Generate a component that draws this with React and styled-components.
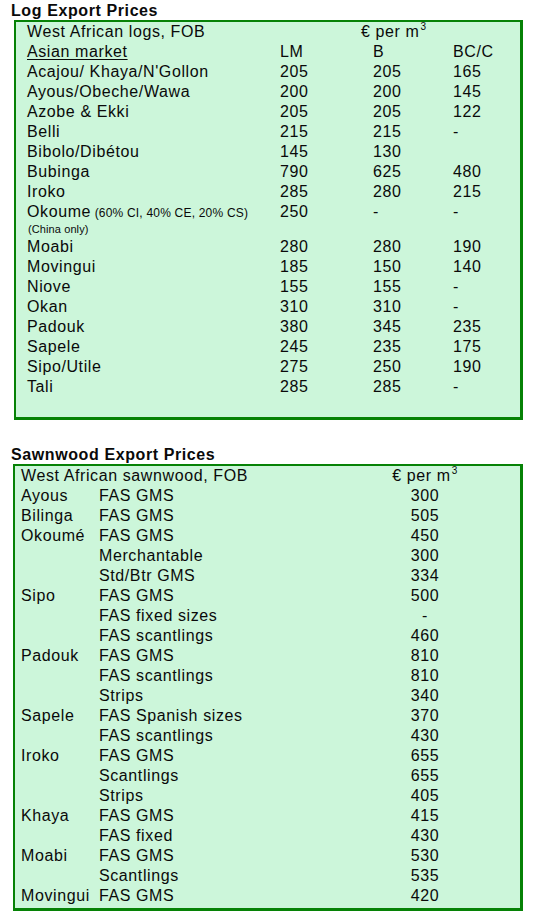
import React from "react";
import styled, { createGlobalStyle } from "styled-components";

const GlobalStyle = createGlobalStyle`
  html, body {
    margin: 0;
    padding: 0;
    background: #ffffff;
  }
  body {
    font-family: "Liberation Sans", Arial, sans-serif;
    color: #0a0a0a;
    font-size: 16px;
    letter-spacing: 0.6px;
  }
`;

const logRows = [
  ["Acajou/ Khaya/N'Gollon", "205", "205", "165"],
  ["Ayous/Obeche/Wawa", "200", "200", "145"],
  ["Azobe & Ekki", "205", "205", "122"],
  ["Belli", "215", "215", "-"],
  ["Bibolo/Dibétou", "145", "130", ""],
  ["Bubinga", "790", "625", "480"],
  ["Iroko", "285", "280", "215"],
  ["Okoume", "250", "-", "-", "(60% CI, 40% CE, 20% CS)", "(China only)"],
  ["Moabi", "280", "280", "190"],
  ["Movingui", "185", "150", "140"],
  ["Niove", "155", "155", "-"],
  ["Okan", "310", "310", "-"],
  ["Padouk", "380", "345", "235"],
  ["Sapele", "245", "235", "175"],
  ["Sipo/Utile", "275", "250", "190"],
  ["Tali", "285", "285", "-"],
];

const sawnRows = [
  ["Ayous", "FAS GMS", "300"],
  ["Bilinga", "FAS GMS", "505"],
  ["Okoumé", "FAS GMS", "450"],
  ["", "Merchantable", "300"],
  ["", "Std/Btr GMS", "334"],
  ["Sipo", "FAS GMS", "500"],
  ["", "FAS fixed sizes", "-"],
  ["", "FAS scantlings", "460"],
  ["Padouk", "FAS GMS", "810"],
  ["", "FAS scantlings", "810"],
  ["", "Strips", "340"],
  ["Sapele", "FAS Spanish sizes", "370"],
  ["", "FAS scantlings", "430"],
  ["Iroko", "FAS GMS", "655"],
  ["", "Scantlings", "655"],
  ["", "Strips", "405"],
  ["Khaya", "FAS GMS", "415"],
  ["", "FAS fixed", "430"],
  ["Moabi", "FAS GMS", "530"],
  ["", "Scantlings", "535"],
  ["Movingui", "FAS GMS", "420"],
];

function PerCubicMetre() {
  return (
    <>
      € per m<Sup>3</Sup>
    </>
  );
}

export default function App() {
  return (
    <Page>
      <GlobalStyle />
      <Title>Log Export Prices</Title>
      <PriceBox $left={14} $bottom={20}>
        <LogGrid>
          <Cell>West African logs, FOB</Cell>
          <Cell $span={3} $offset={81}>
            <PerCubicMetre />
          </Cell>
          <Cell $underline>Asian market</Cell>
          <Cell>LM</Cell>
          <Cell>B</Cell>
          <Cell>BC/C</Cell>
          {logRows.map(([name, lm, b, bc, note, sub]) => (
            <React.Fragment key={name}>
              <Cell>
                {name}
                {note && <Note> {note}</Note>}
                {sub && <SubNote>{sub}</SubNote>}
              </Cell>
              <Cell>{lm}</Cell>
              <Cell>{b}</Cell>
              <Cell>{bc}</Cell>
            </React.Fragment>
          ))}
        </LogGrid>
      </PriceBox>

      <Title $top={24}>Sawnwood Export Prices</Title>
      <PriceBox $left={13} $bottom={2}>
        <SawnGrid>
          <Cell $span={2}>West African sawnwood, FOB</Cell>
          <Cell $center>
            <PerCubicMetre />
          </Cell>
          {sawnRows.map(([species, grade, price], i) => (
            <React.Fragment key={i}>
              <Cell>{species}</Cell>
              <Cell>{grade}</Cell>
              <Cell $center>{price}</Cell>
            </React.Fragment>
          ))}
        </SawnGrid>
      </PriceBox>
    </Page>
  );
}

const Page = styled.div`
  width: 534px;
  padding-bottom: 9px;
`;

const Title = styled.h2`
  margin: ${(p) => p.$top || 0}px 0 0 11px;
  font-size: 16px;
  font-weight: 700;
  line-height: 21px;
  height: 20px;
`;

const PriceBox = styled.section`
  margin-left: ${(p) => p.$left}px;
  width: ${(p) => 523 - p.$left}px;
  box-sizing: border-box;
  background: #ccf6da;
  border-style: solid;
  border-color: #068206;
  border-width: 2px 3px 3px 2px;
  padding-bottom: ${(p) => p.$bottom}px;
`;

const LogGrid = styled.div`
  display: grid;
  grid-template-columns: 253px 93px 80px 1fr;
  padding-left: 11px;
  align-items: start;
`;

const SawnGrid = styled.div`
  display: grid;
  grid-template-columns: 78px 261px 130px;
  padding-left: 6px;
  align-items: start;
`;

const Cell = styled.div`
  line-height: 20px;
  white-space: nowrap;
  grid-column: ${(p) => (p.$span ? `span ${p.$span}` : "auto")};
  padding-left: ${(p) => p.$offset || 0}px;
  text-align: ${(p) => (p.$center ? "center" : "left")};
  text-decoration: ${(p) => (p.$underline ? "underline" : "none")};
  text-underline-offset: 2px;
`;

const Note = styled.span`
  font-size: 12px;
  letter-spacing: 0.2px;
`;

const SubNote = styled.div`
  font-size: 11px;
  line-height: 16px;
  letter-spacing: 0.1px;
  margin-top: -2px;
  height: 16px;
  padding-left: 1px;
`;

const Sup = styled.sup`
  font-size: 10px;
  line-height: 0;
  vertical-align: 7px;
  margin-left: 1px;
`;
